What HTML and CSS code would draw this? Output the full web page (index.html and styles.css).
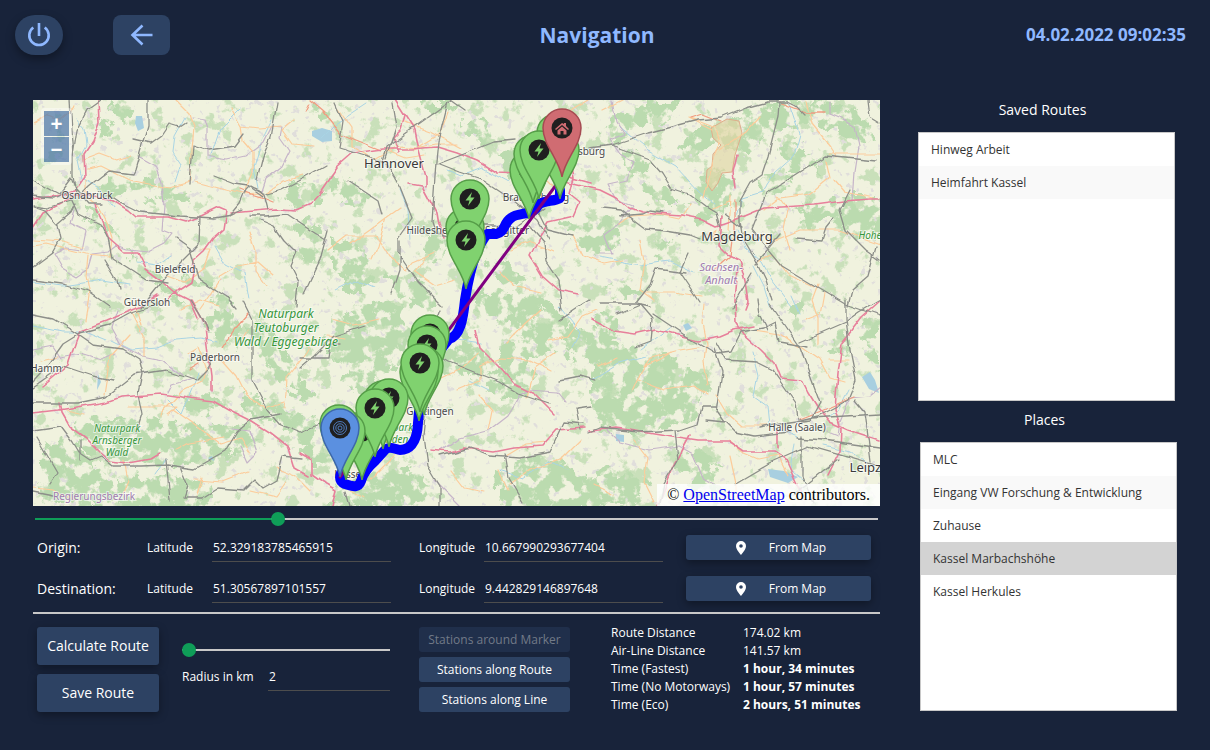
FILE: index.html
```html
<!DOCTYPE html>
<html lang="en">
<head>
<meta charset="utf-8">
<title>Navigation</title>
<link rel="stylesheet" href="styles.css">
</head>
<body>
<header class="topbar">
  <div class="topbar-actions">
    <button class="icon-button power" type="button" aria-label="Power">
      <svg width="24" height="24" viewBox="0 0 24 24"><path d="M12 0v13M6.300 4.500a9.700 9.700 0 1 0 11.400 0"/></svg>
    </button>
    <button class="icon-button back" type="button" aria-label="Back">
      <svg width="24" height="24" viewBox="0 0 24 24"><path d="M22.500 12H2.500M12.500 2.500L2.500 12l10 9.500"/></svg>
    </button>
  </div>
  <h1 class="title">Navigation</h1>
  <time class="clock">04.02.2022 09:02:35</time>
</header>
<main class="layout">
  <section class="planner">
    <div class="map">
      <svg class="map-canvas" viewBox="33 100 847 406" preserveAspectRatio="xMidYMid slice" role="img" aria-label="Route map">
        <defs>
          <filter id="rough" x="0" y="0" width="100%" height="100%" color-interpolation-filters="sRGB">
            <feTurbulence type="fractalNoise" baseFrequency=".07" numOctaves="4" seed="4"/>
            <feDisplacementMap in="SourceGraphic" scale="26" xChannelSelector="R" yChannelSelector="G" result="shape"/>
            <feTurbulence type="fractalNoise" baseFrequency=".08" numOctaves="4" seed="7"/>
            <feColorMatrix values="0 0 0 0 1  0 0 0 0 1  0 0 0 0 1  0 10 0 0 -3.900" result="holes"/>
            <feComposite in="shape" in2="holes" operator="in"/>
          </filter>
          <filter id="wiggle" x="0" y="0" width="100%" height="100%" color-interpolation-filters="sRGB">
            <feTurbulence type="fractalNoise" baseFrequency=".06" numOctaves="1" seed="9"/>
            <feDisplacementMap in="SourceGraphic" scale="7" xChannelSelector="R" yChannelSelector="G"/>
          </filter>
          <filter id="woods" x="0" y="0" width="100%" height="100%" color-interpolation-filters="sRGB">
            <feTurbulence type="fractalNoise" baseFrequency=".06" numOctaves="5" seed="12"/>
            <feColorMatrix values="0 0 0 0 .79  0 0 0 0 .88  0 0 0 0 .73  12 0 0 0 -7.200"/>
          </filter>
          <filter id="towns" x="0" y="0" width="100%" height="100%" color-interpolation-filters="sRGB">
            <feTurbulence type="fractalNoise" baseFrequency=".13" numOctaves="3" seed="31"/>
            <feColorMatrix values="0 0 0 0 .88  0 0 0 0 .87  0 0 0 0 .86  0 12 0 0 -7.900"/>
          </filter>
          <path id="pin" d="M0 49C-3 31-19 17-19 0A19 19 0 0 1 19 0C19 17 3 31 0 49z"/>
          <g id="station">
            <use href="#pin" fill="#80d26f" stroke="#559d48" stroke-width="1.500"/>
            <circle r="10.500" fill="#1f1f1f"/>
            <path d="M2-7L-4.500 1.500H-.5L-2 7L4.500-1.500H.5z" fill="#80d26f"/>
          </g>
        </defs>
        <rect x="33" y="100" width="847" height="406" fill="#f0f2de"/>
        <rect x="33" y="100" width="847" height="406" filter="url(#woods)"/>
        <rect x="33" y="100" width="847" height="406" filter="url(#towns)"/>
        <g filter="url(#rough)" fill="#bbdbaf">
          <rect x="33" y="100" width="847" height="406" fill="none"/>
          <path d="M100 182l30-3 45 10 22 10-15 6-35-9-44-4zM88 208l18 12 30 40 30 22 18 22-14-3-30-34-24-28-30-20zM176 268l30 14 28 20-12 5-34-22zM282 190l30-8 14 10-10 16-28 2zM292 215l22 12 10 24-14 16-12-24zM96 117l12 3 4 14-12 2zM110 104l20 4 3 16-14-2zM316 102l10 0 6 16-14 4z"/>
          <path d="M330 176l34 16 8 18-20-4-22-18zM332 240l30 8 10 30-16 14-24-18zM384 270l34 10 22 24-20 5-30-16zM420 100l40 0-12 12-22-4zM466 120l16 2 16 20-14 4-16-14zM500 152l26 4 14 26-22 0-16-14zM425 228l20 8-2 30-18-14zM475 288l50 6 30 16-60 10-20-16zM560 218l50 4 14 20-28 12-30-20zM488 260l20 5 16 12-14 10-20-14z"/>
          <path d="M612 118l34-18 38 0-14 18-36 10-16 18-18-12zM620 152l34 6-6 16-26-4zM686 130l50-10 22-20 36 4-12 24-30 22-36-6-34 8zM690 190l22-18 28 6-14 32-26 16zM770 100l50 0 44 14 18 28-34-4-32-14-30 4zM778 140l28 6 12 22-32 4zM798 206l40-8 42 0 0 36-28 4-20-18-28 6zM640 182l26 6 18 14-34 0zM758 176l26-2 10 10-24 10zM606 286l26-2 10 12-32 2zM652 242l18-2 2 14-16 4z"/>
          <path d="M76 422l60-6 40 10 18 24-30 16-50-6-34-14zM40 448l30-6 22 14 18 28 30 18-4 8-60 0-36-12zM120 478l44-4 38 6 12 16-20 16-70 0zM160 432l44-8 44-4 14 18-34 20-44 8-34-8zM178 397l36-4 8 12-28 10zM242 400l36-2 4 20-28 4zM202 318l26-8 14 16-8 20-26-16zM248 320l28 10 14 34 22 30-14 6-24-28-22-28zM282 410l30 4 8 26-18 8-20-16z"/>
          <path d="M330 320l50-16 20 4 14 24-22 44-42-4-24-24zM300 430l30 6 4 30-28-4zM344 370l24-10 14 12-12 20-24-4zM330 492l60-26 34 8 10 24-40 14-60 0zM424 340l34-8 24 14 4 24-22 10-34-12zM478 376l24-8 32 12-8 16-28 2zM500 352l18-12 30-32 18 6-8 28-30 22-20 18zM560 324l40 8 30 16-4 24-30-4-32-16zM498 470l44-14 34 12 24 22-40 20-60-4z"/>
          <path d="M592 350l50-4 44 16 22 22-16 34-44 14-56-4zM590 310l20 6 14 16-22 12zM670 452l28-4 24 14-12 12-34-4zM592 470l34-2 20 20-12 20-44-4zM690 470l20 0 14 28-20 8-16-18zM830 334l12-4 8 20-12 8zM862 318l18 6 0 50-12-6zM788 304l18 0-4 14-12-2zM560 474l32 14 14 20-40 0z"/>
          <path d="M500 320l20-30 24 8-10 26-16 14z"/>
        </g>
        <path fill="#e0d5a5" fill-opacity=".65" stroke="#dfae8c" d="M711 128l16-9 12 2 3 12-7 22-3 17-10 1-4 10-6 8-6-9 1-12 5-4 1-12 8-9-8-7z"/>
        <g fill="#a8cfe0">
          <path d="M136 116l6 0 2 12-6 3-3-8zM312 131l10-3 10 3 0 10-10 1-10-6zM862 377l8-5 5 8 4 13-10-4zM768 469l16 2 14 6-10 6-18-6zM616 434l8 1 0 7-8-1zM683 325l5-2 4 5-6 3zM98 374l3 8-4 8zM208 458l4-2 2 5z"/>
        </g>
        <g filter="url(#wiggle)" fill="none" stroke-linejoin="round" stroke-linecap="round">
          <rect x="33" y="100" width="847" height="406"/>
          <g stroke="#a9d4e4" stroke-width="1">
            <path d="M76 118l8 10 2 18-8 14 4 18 18 10 14 20M185 118l-10 18-2 16 8 12-6 18M240 108l-20 20-10 30M272 120l-10 20-8 28 4 20M215 246l10 18 20 10 4 24M33 282l30 4 40-6 26 4M170 255l-14 10-20-3M322 138l14-14 30-20M336 290l20-10 18 8M400 190l8 20 2 30M448 170l14 6 20-8 26 14"/>
            <path d="M618 126l30 24 28 16 24 26 14 12M790 104l10 30-6 22-20 18-12 18-20 6-6 18M738 230l8 18 16 14 10 18 20 26M754 266l10 20 6 20M600 257l40 8 30-4 24 12M792 296l8 18M112 340l20 10 24-2 20-8 26-2 14 4M33 326l30 6 24 0 20 8M168 400l14 14 10-24 6-18M166 460l-10 14M440 320l16 20 26 4M500 470l24 8 24-16 20 8M560 306l20 26-8 14M640 350l30-22M590 380l26-16 30-8M752 352l6 24-4 20 14 10 2 20 30 12M794 444l-4 26 16 12M770 488l14 8 20-4M824 446l26 6 24 14M848 390l-10 20-8 6M470 380l20 10"/>
          </g>
          <g stroke="#c6b5c9" stroke-width="1.200">
            <path d="M138 156l18 10 6 16 2 24-2 24 10 4-8 10-16 8-20-2-12-4-8 6-16 2-4 14-12 8-14-8-8-14 12-6 16 2 4-20-16-8 4-12M192 118l13 2 3 8 0 28 20 4 18-4 18-14 8-16 10 1-2 10 10 14-8 16-16 12-4 12M612 100l4 22 8 12-14 6 10 14 14 8-8 18-18 4 8 16 16 6-12 16-16 12 8 20-12 0M830 102l0 12 14 6 10 6 4 20-4 26-2 28M118 310l-6 18 10 18 20 10 20 4 20 14M168 392l4-8 20-6M240 445l8 18 10-10-8-22-18-2M33 350l20-4 8 12 20-4 20 6 14-6"/>
            <path d="M440 452l20-14 30-8 18-14 12-20 8-6 30 2 8 10M605 428l14 14 30 8 30-4 14 8 10 24 14 8M828 432l10 4 2-14 10-24 20-2 10-8M434 480l18 18 10 10"/>
          </g>
          <g stroke="#fccc9b" stroke-width="1.200">
            <path d="M33 123l14-8 14 4 14-12M84 160l16-6 16 6 14-4M86 180l0 18 14 10 8 16 4 14-2 18-24-2-40-10-13 2M88 256l-2 20 4 20-4 24M175 100l14 14 4 14-2 20 0 34-22 6-40-8-28-14-14 3M195 182l30 8 18 4 30-2M231 108l10 18 18 2 22-2M241 126l2 14 10 12 0 20-8 18M294 120l-12 10 10 14 22 2M303 175l-20 6-14 10-12 6M33 240l30 2 20 6M200 250l10 0-6 18-20 14-16-6M218 278l20-12 20-4 16 14M220 280l-10 16-10 14M250 232l6 20 0 20 10 14M180 310l20-10 20 6"/>
            <path d="M338 108l14 20 0 18 22 14 24-14 18 2 20-4 20 0M386 150l20 8 20-3M402 122l28 10 30 16M448 112l-8 22-26 16M328 250l18-14 30 0 14 22 16 12 6-8 24-10M400 208l-14 10-8 28-6 14M350 244l20-14 16-12M425 258l-10 14 20 14 20-6M548 122l20-10 20-12M520 160l18 12 16 16M510 250l20-8 24 10M500 272l14 14 26 6M572 236l10 20 22 8 20-4"/>
            <path d="M602 110l20-10M690 118l26 10 4 14-8 18-4 20-4 18M712 130l-24-12M720 150l26-18 14-16M730 196l-2 34M690 204l-10 14-18-4-30 2-14 8M640 240l4 20-4 30 14 10M644 292l30 0 28 4M712 240l4-10M730 200l-20 10M806 100l6 24 18 22 8 12M830 154l50 0M826 160l4 18-20 16-30 4-16 12M778 196l10 14-4 20 6 20M834 180l10 12 30 6M762 236l14 4 24-10 40 0 40 14M758 262l14-8 16 20 26 12M818 284l-6 16 6 18 0 26"/>
            <path d="M40 360l18-4M66 410l18 4M128 407l50 0-10 8M104 395l6-38 20-22M136 305l6 20M144 356l0-20-12-24M174 410l20 14 26 20 20-6 10 16M160 415l22-24 20-10 4-14-8-20-10 6M220 358l16 18 10 20 20 12 18-6M285 408l2-30 20-26 8-14M240 344l8-14M124 460l4 20-6 14M33 488l20 2 20 10M196 480l26 2 26-10M276 468l20 8 14 14M202 478l-6 20M175 450l14-8 34-6M250 490l26 6 10-14"/>
            <path d="M333 320l20 6 26-6M328 336l18 2M456 390l24-10 0-14 20-8 30 2 20 10M440 378l24-12 14-12M480 396l12 14-4 20M548 340l20-4 14-20 14-6M555 354l-20 14-8 30M540 310l-20 18-14 14M420 430l-30 30-20 20M350 490l14 6M580 440l-20 20-30 10-20 14M498 470l10 20M506 456l20-12 20-2M450 470l14 18 20 4"/>
            <path d="M704 304l-2 20 4 20-2 18 4 24M638 380l26 10 30-4 14 8M645 366l12-6 14-8M598 366l20-8M716 394l12 20 14 12 28 0M704 346l-24 4-30 8-10 16-8 18M804 320l16-6 4-22M800 346l20 14 10 18 14 4M728 440l16 14 14 6 20-4 10 20M730 456l6 28 0 20M634 440l14 18-4 24 10 20M754 330l26 4 20 14M828 360l20 0M594 484l20 10"/>
          </g>
          <g stroke="#f19c82" stroke-width="1.300">
            <path d="M310 104l-4 8M311 100l14 12M323 112l18 22 40 16M240 190l10 4 14 4 10 4M222 348l12-18 14-16M188 370l10-6M735 200l0 36M732 240l-2 16-16 14M690 118l12-4 20 8M779 102l26 10 20 0M800 419l30-12 24-10"/>
          </g>
          <g stroke="#e7809b" stroke-width="1.600">
            <path d="M33 199l22-3 20-5 10-15-1-22 8-12 7-20-1-22M33 228l10-15 19-10 12-8 36 4 18 11 8 7 33 0 18 5 10-4 22-11 7 3-3 19-10 9-10 14-9 8-1 12-2 10-12 8-13 12M95 205l6 14 8 20 16 14 12 0 8 16 16 12 14 12 14 7 8 18M231 213l22-2 24-2 20 1 14-6 12-13"/>
            <path d="M320 192l17-25 16-14 30-4 28 0 26-2 20 6 20 8 20 12 22 1 46 2 26 7M395 100l10 16-4 14-8 8 6 14M405 114l10 16 4 20 7 26 0 10M410 184l12 2 14 26 2 12 6 14M570 156l4 22-4 16 10 8-6 14-26 6-8 14-10 20 12 20 16 14 20 4"/>
            <path d="M564 182l36 8 16 8 12 10 14 4 40 3 20 4 14 7 24-8 24-10 50-3 30-4 26-2 10 0M721 216l-2 30 8 8 12 6 6 22 3 20-3 8M737 155l-4 16 2 18M33 413l26-3 30-5 18-3 14-5 40-3 28 4 24 3 16 9 20 10 22 14 18 14 6 20 14 8M42 387l12-10 14-12 8-24 4-10 26-10 34-14 18-12M60 402l2 10 8 14 16 12 14 14 10 9 18 2 22-4 10-6M191 300l14 26 2 20 4 30 0 14M880 301l-18 16-20 26-4 30-3 36 6 20-1 22-12 24M878 440l-30-10-18-8-12-14-10-16-6-12-22-2-6-15-14-14-16-14-8-12-1-22 3-32"/>
            <path d="M590 318l24 13 20 3 22-5 42 11 22-4 14-6 20-4M590 431l26-3 20 3 42 7 20 3 30 0 16 11 30 0 12 8 8 18 10 22M690 436l-16 30-8 20-8 20M778 430l0 18M300 453l12 7 0 14 14 10 10 6-4 16M476 330l4 18 20 20 14 16 20 10 20 20M430 450l20 2 14-4 30 4 20-4 28-2 14-16 30-2"/>
          </g>
          <g stroke="#8d8f8a" stroke-width="1.300">
            <path d="M101 100l-14 10-10 20-4 26 0 20 2 12 14 16 14 0M70 100l2 30 2 26M148 100l0 25-13 45-2 4-24-3-20 16-8 8M33 180l26 14 12-16 6 14M33 196l20 2 12-6 6 8-24 8-14-2M33 207l12 4 12 14 3 14-8 14-19 14M57 224l14-12 4-8M70 196l8 18 24 12 6 12 4 20 22 14 12 8 22 3M108 194l12 8 20 10 40 4 34 2 18-3 10-5M133 140l18 4 11-8 8-12 10 3 6-4M190 185l3-40 16 5 26-4 9-12M214 176l20 8 14 2 14 10M200 216l-1 28-16 16-16 16-26 32M230 216l10-12 6-14 4-4 14 8 4 16M254 188l14 6 14-4 30-16 14-8M257 180l6-24 8-18 6-36M250 216l16 0 20-2 24 16 16 10M176 238l14 10 8 30 12 8 16 10 10 12M105 260l12 20 2 10M33 280l30 4 26 8 20 14M296 306l2-24-8-16 6-14-12-12-10-14-14-6"/>
            <path d="M335 102l8 18-4 28 26 8 18 5 4-14 64-46M392 104l4 24-10 30M386 164l14 24 12 30-14 20 0 14 20 30 24 24M448 102l-10 40-2 20-4 60 4 12 24 6M438 164l26-10 30-12 20-2M440 164l20 8 24 8 30 20 24 20 12 20M470 224l30 0 14 4 30-20M530 226l14 16 2 20 12 18 4 30M538 210l10 20 24 6M328 230l-8 30-16 34M348 180l30 20 4 14M400 240l0 30-8 24M450 100l14 10"/>
            <path d="M590 148l22-3 36-12 50-13 24-2 24-10 22-6 20 0 8 4 8 8M779 102l-1 14-10 40-6 18-12 8-10 18 0 22 2 12M612 145l38 14 12 14 10 16 18 6 16 12 10 6 4 14M742 228l-18-14M752 230l14-36 60-38 50 5M752 230l30 36 30 18 34 20 34 12M744 240l12 20 10 20 6 20M602 209l20 2 24 18 20 2 24 4 10 4M700 302l-20-30 8-18M600 303l36 0 14-18 6-16 30 4M636 303l14 3M752 274l-20 34M756 264l24-30M850 190l-10 20 6 20 20 20 14 10M876 246l-8 30-16 14-4 16M795 238l26 2 4-12 8-10M868 100l2 16 10 6M620 216l22-2 8-4 12 2"/>
            <path d="M33 382l10-11 20-28 16-10 30-8 20-11 30-10M33 388l20-14 10-8 30 10 20 4M33 403l45 0 28-6 28-22 32-5 30 10 12-12 5-8M33 315l20 4 20 12 20 14 30 4 16 10 4 16-4 18 4 22-6 18M33 430l28-4 12 16 6 10 12 8 10-4 12 10 28 0 26-1 28 4 30-17 12-20 14-12 30-6M190 300l10 16 8 16M242 300l10 20 0 60 16 30 12 14 20 8 20-8M166 460l4 40M180 466l8 20-4 12 18 0 16-10 26 2 10-10 8 8 14-8 6-24 20 2M38 438l20 34-8 12M33 492l20 4M80 440l0 20"/>
            <path d="M429 350l20 12 30 12 20 8 20 12 30 10M429 356l-2 40-4 40 4 30 12 20 0 20M440 456l30-8 20 8 30 2 30-6M550 452l14-30 20 2M300 368l14-12 20-20 30-10M300 358l28 0 2-14 10 0M345 492l4 14M580 430l-4-22 14-2M440 310l-8 20M560 320l30-20M505 454l4 24 14 24M560 380l20-4 14 4"/>
            <path d="M617 314l24-10 12 14-2 24-16 6M653 314l30 20 24 14 10 6 14-2 10-20 22-4 12-6 4 20 30 5M767 330l-8-16-2-14M770 304l30 44 20 54-10 18-30 4-20 4M798 420l-2-16-14-20-10-14-16-8-30-2-10-18M725 422l-10-14-14 0-4 16-18 6-40 2-40-4-10 4M675 430l3 30-14 24-4 20M706 420l20 2 10 10 18 4 36-4M800 342l46-20 14-10 20-12M846 300l0 20 4 30 6 30-8 20-30 16-18 4M855 400l10 12 6 50M811 418l69-4M802 436l0 40 12 28M798 438l26 2 56 8M735 484l34-20 40-18 70 20M716 412l6-40-8-24M794 494l44-34"/>
          </g>
        </g>
        <g class="map-label" text-anchor="middle">
          <g class="town">
            <text x="87" y="199">Osnabrück</text><text x="175" y="273">Bielefeld</text><text x="147" y="306">Gütersloh</text>
            <text x="215" y="361">Paderborn</text><text x="46" y="372">Hamm</text><text x="797" y="431">Halle (Saale)</text>
            <text x="433" y="234">Hildesheim</text><text x="507" y="234">Salzgitter</text><text x="536" y="201">Braunschweig</text>
            <text x="581" y="155">Wolfsburg</text><text x="430" y="415">Göttingen</text><text x="349" y="478">Kassel</text>
          </g>
          <g class="city"><text x="394" y="168">Hannover</text><text x="737" y="241">Magdeburg</text><text x="871" y="472">Leipzig</text></g>
          <g class="park large"><text x="286" y="318">Naturpark</text><text x="286" y="332">Teutoburger</text><text x="286" y="346">Wald / Eggegebirge</text></g>
          <g class="park"><text x="117" y="432">Naturpark</text><text x="117" y="444">Arnsberger</text><text x="117" y="456">Wald</text><text x="390" y="431">Naturpark</text><text x="390" y="443">Münden</text><text x="872" y="239">Hoher</text></g>
          <g class="region"><text class="italic" x="721" y="271">Sachsen-</text><text class="italic" x="721" y="284">Anhalt</text><text x="94" y="500">Regierungsbezirk</text></g>
        </g>
        <g fill="none" stroke-linejoin="round" stroke-linecap="round">
          <path stroke="#00f" stroke-width="10" d="M560 190v8C554 202 540 200 537 207C531 216 518 212 511 218C503 223 506 232 496 234H487C474 250 468 280 465 300C463 320 460 336 449 339C430 360 419 400 418 423C417 445 408 450 400 450C392 448 388 446 384 451L375 461C368 467 363 474 361 481C358 489 352 486 345 484C340 482 339 479 341 473"/>
          <path stroke="#800080" stroke-width="3" d="M562 177L340 477"/>
        </g>
        <use href="#station" x="556" y="133"/><use href="#station" x="560" y="150"/>
        <use href="#station" x="529" y="170"/><use href="#station" x="533" y="154"/><use href="#station" x="539" y="150"/>
        <use href="#station" x="465" y="227"/><use href="#station" x="470" y="199"/><use href="#station" x="466" y="240"/>
        <use href="#station" x="430" y="334"/><use href="#station" x="427" y="345"/><use href="#station" x="424" y="366"/><use href="#station" x="419" y="372"/><use href="#station" x="420" y="363"/>
        <use href="#station" x="383" y="400"/><use href="#station" x="389" y="398"/><use href="#station" x="362" y="431"/><use href="#station" x="375" y="408"/>
        <use href="#station" x="346" y="431"/><use href="#station" x="339" y="424"/>
        <g transform="translate(340 428)">
          <use href="#pin" fill="#5b90e0" stroke="#3d68aa" stroke-width="1.500"/>
          <circle r="10.500" fill="#1f1f1f"/>
          <g fill="none" stroke="#5b90e0" stroke-width=".8"><circle r="6.500"/><circle r="4.200"/><circle r="2"/></g>
        </g>
        <g transform="translate(562 128)">
          <use href="#pin" fill="#d06c72" stroke="#a64b52" stroke-width="1.500"/>
          <circle r="10.500" fill="#1f1f1f"/>
          <path fill="#d06c72" d="M0-5L-7 1l1 1 6-5 6 5 1-1-3-3v-3H2v1zM0-1.500L-4.500 2.500V6.500h3V3h3v3.500h3V2.500z"/>
        </g>
      </svg>
      <div class="map-zoom">
        <button type="button" aria-label="Zoom in">+</button>
        <button type="button" aria-label="Zoom out">−</button>
      </div>
      <div class="map-credit">© <a href="#osm">OpenStreetMap</a> contributors.</div>
    </div>
    <input class="slider slider-progress" type="range" min="0" max="1000" value="285" aria-label="Route position">
    <form class="coordinates">
      <span class="point-name">Origin:</span>
      <label for="origin-lat">Latitude</label><input class="field" id="origin-lat" value="52.329183785465915">
      <label class="second" for="origin-lon">Longitude</label><input class="field" id="origin-lon" value="10.667990293677404">
      <button class="button small from-map" type="button"><svg width="10" height="14" viewBox="0 0 10 14"><path fill-rule="evenodd" d="M5 0a5 5 0 0 0-5 5c0 3.500 5 9 5 9s5-5.500 5-9a5 5 0 0 0-5-5zm0 3.200a1.800 1.800 0 1 1 0 3.600 1.800 1.800 0 0 1 0-3.600z"/></svg>From Map</button>
      <span class="point-name">Destination:</span>
      <label for="dest-lat">Latitude</label><input class="field" id="dest-lat" value="51.30567897101557">
      <label class="second" for="dest-lon">Longitude</label><input class="field" id="dest-lon" value="9.442829146897648">
      <button class="button small from-map" type="button"><svg width="10" height="14" viewBox="0 0 10 14"><path fill-rule="evenodd" d="M5 0a5 5 0 0 0-5 5c0 3.500 5 9 5 9s5-5.500 5-9a5 5 0 0 0-5-5zm0 3.200a1.800 1.800 0 1 1 0 3.600 1.800 1.800 0 0 1 0-3.600z"/></svg>From Map</button>
    </form>
    <hr class="divider">
    <div class="controls">
      <div class="route-actions">
        <button class="button large" type="button">Calculate Route</button>
        <button class="button large" type="button">Save Route</button>
      </div>
      <div class="radius">
        <input class="slider" type="range" min="2" max="50" value="2" aria-label="Radius">
        <div class="radius-row"><label for="radius">Radius in km</label><input class="field" id="radius" value="2"></div>
      </div>
      <div class="station-actions">
        <button class="button small flat" type="button" disabled>Stations around Marker</button>
        <button class="button small flat" type="button">Stations along Route</button>
        <button class="button small flat" type="button">Stations along Line</button>
      </div>
      <table class="summary">
        <tr><th scope="row">Route Distance</th><td>174.02 km</td></tr>
        <tr><th scope="row">Air-Line Distance</th><td>141.57 km</td></tr>
        <tr><th scope="row">Time (Fastest)</th><td class="strong">1 hour, 34 minutes</td></tr>
        <tr><th scope="row">Time (No Motorways)</th><td class="strong">1 hour, 57 minutes</td></tr>
        <tr><th scope="row">Time (Eco)</th><td class="strong">2 hours, 51 minutes</td></tr>
      </table>
    </div>
  </section>
  <aside class="sidebar">
    <section class="panel routes">
      <h2>Saved Routes</h2>
      <ul class="list"><li>Hinweg Arbeit</li><li>Heimfahrt Kassel</li></ul>
    </section>
    <section class="panel places">
      <h2>Places</h2>
      <ul class="list"><li>MLC</li><li>Eingang VW Forschung &amp; Entwicklung</li><li>Zuhause</li><li class="selected">Kassel Marbachshöhe</li><li>Kassel Herkules</li></ul>
    </section>
  </aside>
</main>
</body>
</html>
```
FILE: styles.css
```css
* { box-sizing: border-box; }
body {
  margin: 0;
  min-height: 100vh;
  display: flex;
  flex-direction: column;
  background: #18233a;
  color: #fff;
  font: 12px/18px "Open Sans", "Noto Sans", sans-serif;
}
button, input { font: inherit; color: inherit; }
button { border: 0; padding: 0; cursor: pointer; }

.topbar { display: flex; align-items: center; padding: 15px 24px 0 15px; }
.topbar-actions { display: flex; gap: 50px; }
.icon-button {
  display: flex;
  align-items: center;
  justify-content: center;
  height: 40px;
  background: #2d4263;
}
.icon-button svg { fill: none; stroke: #8fb8ff; stroke-width: 2.6; }
.power { width: 48px; border-radius: 20px; box-shadow: 0 4px 10px rgba(0, 0, 0, .35); }
.back { width: 57px; border-radius: 8px; }
.title { flex: 1; margin: 0; padding-right: 2px; text-align: center; color: #8fb8ff; font-size: 21px; line-height: 40px; }
.clock { color: #8fb8ff; font-size: 17px; font-weight: 700; }

.layout {
  flex: 1;
  display: grid;
  grid-template-columns: minmax(0, 1fr) 259px;
  gap: 38px;
  padding: 45px 33px 38px;
}
.planner { display: flex; flex-direction: column; min-width: 0; }

.map { position: relative; flex: 1 1 300px; min-height: 300px; overflow: hidden; }
.map-canvas { position: absolute; inset: 0; width: 100%; height: 100%; }
.map-label { font-family: "Noto Sans", sans-serif; paint-order: stroke; stroke: rgba(255, 255, 255, .6); stroke-width: 2px; }
.town { font-size: 10px; fill: #4a4a4a; }
.city { font-size: 13px; fill: #3a3a3a; }
.park { font-size: 10px; font-style: italic; fill: #36963b; }
.park.large { font-size: 12px; }
.region { font-size: 10px; fill: #a07cae; }
.italic { font-size: 11px; font-style: italic; }
.map-zoom {
  position: absolute;
  left: 8px;
  top: 8px;
  display: grid;
  gap: 1px;
  padding: 3px;
  border-radius: 4px;
  background: rgba(255, 255, 255, .4);
}
.map-zoom button { width: 25px; height: 25px; background: rgba(0, 60, 136, .5); font-size: 21px; font-weight: 700; line-height: 25px; }
.map-credit {
  position: absolute;
  right: 0;
  bottom: 0;
  padding: 2px 10px;
  background: rgba(255, 255, 255, .8);
  color: #000;
  font: 16px/18px "Liberation Serif", serif;
}
.map-credit a { color: #00e; }

.slider { --filled: 0%; appearance: none; display: block; width: 100%; height: 14px; margin: 0; background: none; }
.slider::-webkit-slider-runnable-track { height: 2px; background: linear-gradient(90deg, #0f9d58 var(--filled), #c8c8c8 var(--filled)); }
.slider::-webkit-slider-thumb { appearance: none; width: 14px; height: 14px; margin-top: -6px; border-radius: 50%; background: #0f9d58; }
.slider-progress { --filled: 28%; width: auto; margin: 6px 2px; }

.coordinates {
  display: grid;
  grid-template-columns: 110px 65px minmax(0, 1fr) 93px minmax(0, 1fr) 208px;
  grid-auto-rows: 31px;
  row-gap: 10px;
  align-items: center;
  padding: 0 9px 8px 4px;
}
.point-name { font-size: 14px; }
.second { padding-left: 28px; }
.field {
  width: 100%;
  height: 29px;
  padding: 0 1px;
  border: 0;
  border-bottom: 1px solid #4d4d4d;
  border-radius: 0;
  background: none;
  outline: 0;
}
.button {
  display: block;
  border-radius: 3px;
  background: #2d4263;
  text-align: center;
  box-shadow: 0 3px 8px rgba(0, 0, 0, .35);
}
.button.small { height: 25px; }
.button.large { height: 38px; font-size: 14px; }
.button.flat { box-shadow: none; }
.button:disabled { background: #202f4b; color: #727a88; }
.from-map { display: flex; align-items: center; justify-content: center; gap: 23px; margin-left: 23px; padding-left: 5px; }
.from-map svg { fill: #fff; }
.divider { width: 100%; height: 2px; margin: 0 0 13px; border: 0; background: #c8c8c8; }

.controls { display: grid; grid-template-columns: 122px minmax(0, 1fr) 151px 301px; padding: 0 9px 0 4px; }
.route-actions { display: grid; gap: 9px; align-content: start; }
.radius { padding: 16px 29px 0 23px; }
.radius-row { display: grid; grid-template-columns: 86px minmax(0, 1fr); align-items: center; margin-top: 5px; }
.station-actions { display: grid; gap: 5px; align-content: start; }
.summary { align-self: start; margin: -3px 0 -2px 41px; border-collapse: collapse; text-align: left; }
.summary th { width: 132px; padding: 0; font-weight: 400; }
.summary td { padding: 0; }
.summary .strong { font-weight: 700; }

.sidebar { display: flex; flex-direction: column; gap: 9px; padding-bottom: 1px; }
.panel { flex: 1; display: flex; flex-direction: column; }
.routes { padding-right: 2px; }
.places { padding-left: 2px; }
.panel h2 { margin: 0 0 12px; padding-right: 8px; font-size: 14px; line-height: 20px; font-weight: 400; text-align: center; }
.list { flex: 1; margin: 0; padding: 0; list-style: none; background: #fff; border: 1px solid #c8c8c8; color: #333; }
.list li { padding: 0 12px; line-height: 33px; }
.list li:nth-child(even) { background: #f9f9f9; }
.list li.selected { background: #d3d3d3; }
```
